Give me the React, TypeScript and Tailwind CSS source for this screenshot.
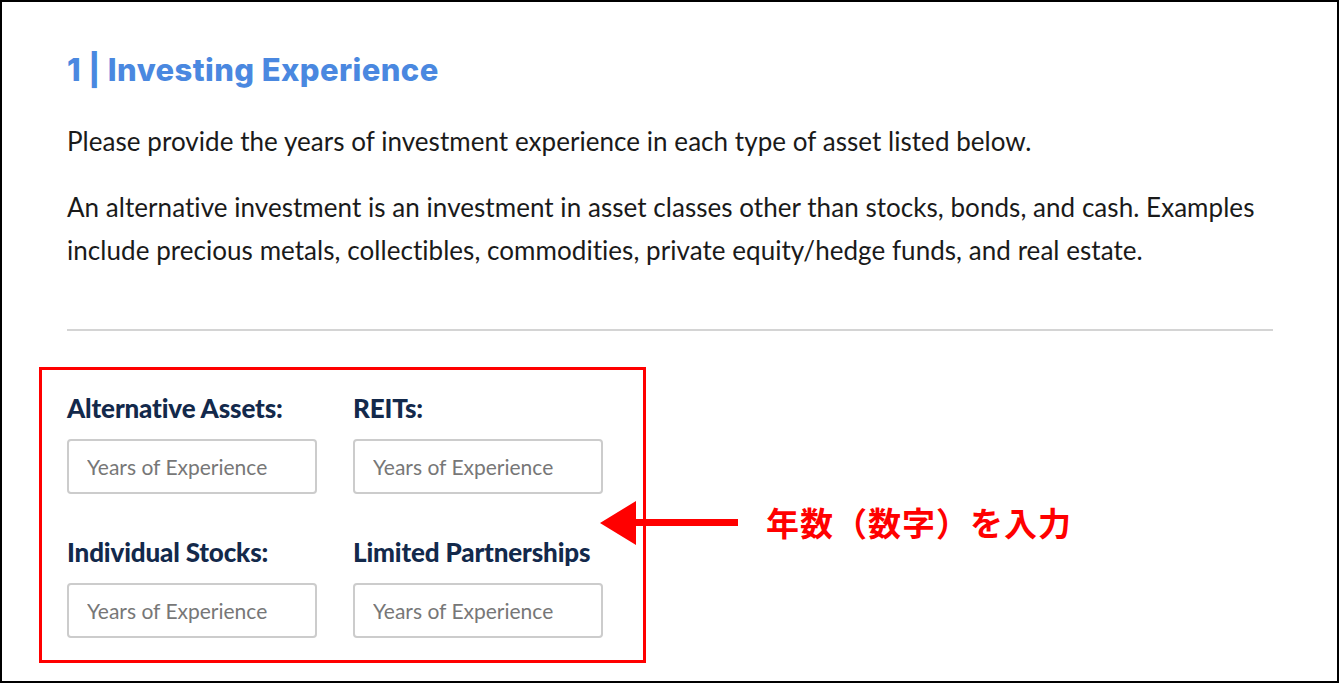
import React from 'react';

const fields = [
  { label: 'Alternative Assets:' },
  { label: 'REITs:' },
  { label: 'Individual Stocks:' },
  { label: 'Limited Partnerships' },
];

function ArrowLeft() {
  return (
    <svg width="140" height="48" viewBox="0 0 140 48" className="block">
      <polygon points="0,24 36,2 36,20 138,20 138,27 36,27 36,46" fill="#ff0000" />
    </svg>
  );
}

export default function App() {
  return (
    <div className="w-[1339px] h-[683px] border-2 border-black bg-white overflow-hidden" style={{ fontFamily: 'Lato, "Open Sans", sans-serif' }}>
      <div className="pl-[65px] pr-[65px] pt-[48px]">
        <h2 className="text-[31px] font-extrabold text-[#4a88e0] leading-[40px] tracking-[0.4px]" style={{ fontFamily: 'Inter, "Noto Sans", sans-serif' }}>
          1 | Investing Experience
        </h2>

        <p className="mt-[36px] text-[26px] leading-[30px] text-[#1a1a1a] tracking-[0.05px]">
          Please provide the years of investment experience in each type of asset listed below.
        </p>
        <p className="mt-[30px] text-[26px] leading-[43px] text-[#1a1a1a] tracking-[0.05px]">
          An alternative investment is an investment in asset classes other than stocks, bonds, and cash. Examples include precious metals, collectibles, commodities, private equity/hedge funds, and real estate.
        </p>

        <div className="mt-[57px] h-[2px] bg-[#d4d4d4] w-[1206px]" />

        <div className="flex items-center mt-[36px] -ml-[28px]">
          <div className="w-[607px] border-[3px] border-[#ff0000] pl-[25px] pt-[23px] pb-[22px]">
            <div className="grid grid-cols-[250px_250px] gap-x-[36px] gap-y-[43px]">
              {fields.map((f) => (
                <div key={f.label} className="flex flex-col">
                  <label className="text-[26px] font-black text-[#13294b] leading-[30px] tracking-[-0.15px]">{f.label}</label>
                  <input
                    type="text"
                    placeholder="Years of Experience"
                    className="mt-[16px] w-[250px] h-[55px] border-2 border-[#cccccc] rounded-[4px] px-[18px] text-[21px] placeholder:text-[#777777] outline-none"
                  />
                </div>
              ))}
            </div>
          </div>
          <div className="-ml-[46px] mt-[16px] flex items-center">
            <ArrowLeft />
            <span className="ml-[26px] text-[33px] font-bold text-[#ff0000] tracking-[1px]" style={{ fontFamily: '"Noto Sans CJK JP", sans-serif' }}>
              年数（数字）を入力
            </span>
          </div>
        </div>
      </div>
    </div>
  );
}
